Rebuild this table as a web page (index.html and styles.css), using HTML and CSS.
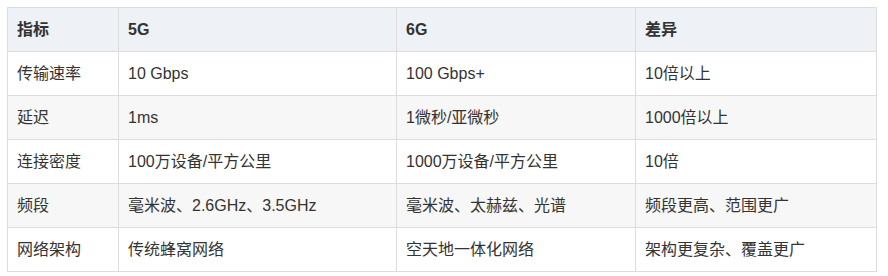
FILE: index.html
```html
<!DOCTYPE html>
<html lang="zh">
<head>
<meta charset="utf-8">
<link rel="stylesheet" href="styles.css">
</head>
<body>
<table class="cmp">
  <colgroup>
    <col class="c1"><col class="c2"><col class="c3"><col class="c4">
  </colgroup>
  <thead>
    <tr><th>指标</th><th>5G</th><th>6G</th><th>差异</th></tr>
  </thead>
  <tbody>
    <tr><td>传输速率</td><td>10 Gbps</td><td>100 Gbps+</td><td>10倍以上</td></tr>
    <tr><td>延迟</td><td>1ms</td><td>1微秒/亚微秒</td><td>1000倍以上</td></tr>
    <tr><td>连接密度</td><td>100万设备/平方公里</td><td>1000万设备/平方公里</td><td>10倍</td></tr>
    <tr><td>频段</td><td>毫米波、2.6GHz、3.5GHz</td><td>毫米波、太赫兹、光谱</td><td>频段更高、范围更广</td></tr>
    <tr><td>网络架构</td><td>传统蜂窝网络</td><td>空天地一体化网络</td><td>架构更复杂、覆盖更广</td></tr>
  </tbody>
</table>
</body>
</html>
```
FILE: styles.css
```css
html, body {
  margin: 0;
  padding: 0;
  background: #fff;
}
body {
  padding: 7px;
  font-family: "Liberation Sans", "Noto Sans CJK SC", sans-serif;
  font-size: 16px;
  color: #333;
}
.cmp {
  border-collapse: collapse;
  table-layout: fixed;
  width: 869px;
}
.c1 { width: 111px; }
.c2 { width: 278px; }
.c3 { width: 239px; }
.c4 { width: 241px; }
.cmp th, .cmp td {
  border: 1px solid #dddddd;
  height: 44px;
  padding: 0 10px 0 9px;
  text-align: left;
  vertical-align: middle;
  box-sizing: border-box;
  line-height: 20px;
}
.cmp th {
  background: #eef1f5;
  font-weight: bold;
}
.cmp tbody tr:nth-child(even) td {
  background: #f7f7f7;
}
```
